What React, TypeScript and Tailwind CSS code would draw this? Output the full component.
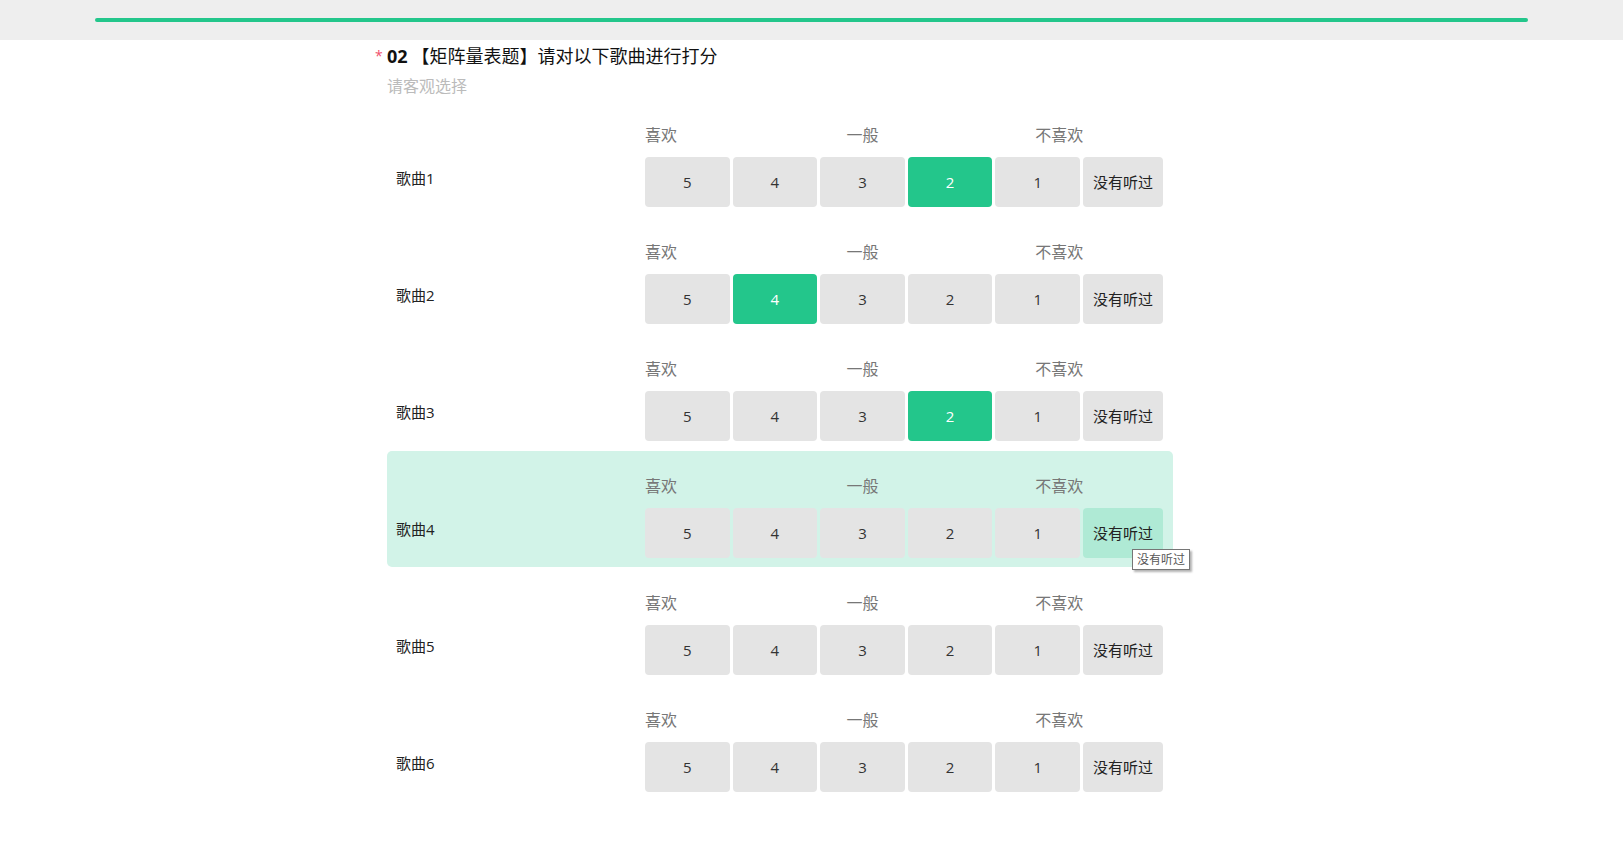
import { useState } from 'react';

type Row = { name: string, selected: string | null };

const rows: Row[] = [
  { name: '歌曲1', selected: '2' },
  { name: '歌曲2', selected: '4' },
  { name: '歌曲3', selected: '2' },
  { name: '歌曲4', selected: null },
  { name: '歌曲5', selected: null },
  { name: '歌曲6', selected: null },
];

const scores = ['5', '4', '3', '2', '1'];
const hoveredRow = 3;

const MatrixRow = ({ row, index }: { row: Row, index: number }) => {
  const isHover = index === hoveredRow;

  return (
    <div
      className={`flex h-[116px] rounded-[5px] pl-[9px] ${isHover ? 'bg-[#d2f3e8]' : ''}`}
    >
      <div className="w-[249px] pt-[68px] text-[15px] leading-[20px] text-[#222]">
        {row.name}
      </div>
      <div className="pt-[24px]">
        <div className="flex gap-[3px] text-[16px] leading-[22px] text-[#777]">
          <div className="w-[84.6px] text-left">喜欢</div>
          <div className="w-[84.6px]" />
          <div className="w-[84.6px] whitespace-nowrap text-center">一般</div>
          <div className="w-[84.6px]" />
          <div className="w-[88px] whitespace-nowrap text-right">不喜欢</div>
        </div>
        <div className="mt-[11px] flex">
          <div className="flex gap-[3px]">
            {scores.map((score) => {
              const active = row.selected === score;
              return (
                <button
                  className={`flex h-[50px] w-[84.6px] items-center justify-center rounded-[4px] text-[15px] ${
                    active ? 'bg-[#23c68b] text-white' : 'bg-[#e4e4e4] text-[#333]'
                  }`}
                  key={score}
                  type="button"
                >
                  {score}
                </button>
              );
            })}
          </div>
          <div className="relative ml-[3px]">
            <button
              className={`flex h-[50px] w-[80px] items-center justify-center rounded-[4px] text-[15px] text-[#222] ${
                isHover ? 'bg-[#afead5]' : 'bg-[#e4e4e4]'
              }`}
              type="button"
            >
              没有听过
            </button>
            {isHover && (
              <div className="absolute left-[49px] top-[41px] z-10 whitespace-nowrap border border-[#767676] bg-white px-[4px] text-[12px] leading-[19px] text-[#575757] shadow-[2px_2px_2px_rgba(0,0,0,0.3)]">
                没有听过
              </div>
            )}
          </div>
        </div>
      </div>
    </div>
  );
};

export default function App() {
  const [answers] = useState(rows);

  return (
    <div className="min-h-[848px] bg-white font-['Open_Sans','Noto_Sans_CJK_SC',sans-serif]">
      <div className="h-[40px] bg-[#eeeeee] pt-[18px]">
        <div className="mx-auto h-[4px] w-[1433px] rounded-full bg-[#23c68b]" />
      </div>

      <div className="mx-auto w-[873px] pt-[4px]">
        <div className="flex items-center text-[18px] leading-[24px] text-[#111]">
          <span className="w-[12px] text-[14px] text-[#f0506e]">*</span>
          <span className="font-bold">02</span>
          <span className="ml-[4px] font-normal">【矩阵量表题】请对以下歌曲进行打分</span>
        </div>
        <div className="ml-[12px] mt-[7px] text-[16px] leading-[22px] text-[#bbbbbb]">
          请客观选择
        </div>

        <div className="ml-[12px] mt-[3px] flex w-[786px] flex-col gap-[1px]">
          {answers.map((row, i) => (
            <MatrixRow index={i} key={row.name} row={row} />
          ))}
        </div>
      </div>
    </div>
  );
}
